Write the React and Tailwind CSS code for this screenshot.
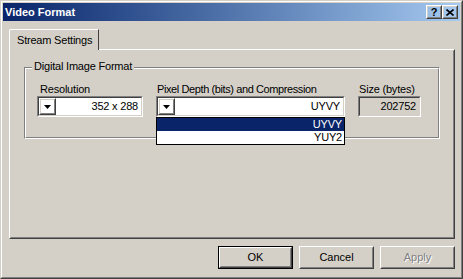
import React from 'react'

const face = 'bg-[#D4D0C8]'

function Raised({ className = '', children }) {
  return (
    <div className={`border border-t-white border-l-white border-r-[#404040] border-b-[#404040] ${className}`}>
      <div className="flex h-full w-full items-center justify-center border border-t-[#D4D0C8] border-l-[#D4D0C8] border-r-[#808080] border-b-[#808080]">
        {children}
      </div>
    </div>
  )
}

function Sunken({ className = '', inner = 'bg-white', children }) {
  return (
    <div className={`border border-t-[#808080] border-l-[#808080] border-r-white border-b-white ${className}`}>
      <div className={`flex h-full w-full items-center border border-t-[#404040] border-l-[#404040] border-r-[#D4D0C8] border-b-[#D4D0C8] ${inner}`}>
        {children}
      </div>
    </div>
  )
}

function ArrowDown() {
  return (
    <svg width="7" height="4" viewBox="0 0 7 4">
      <path d="M0 0h7L3.5 4z" fill="#000" />
    </svg>
  )
}

function Combo({ value, children }) {
  return (
    <div className="relative">
      <Sunken className="h-[21px] w-full">
        <Raised className="h-[17px] w-[17px] shrink-0">
          <ArrowDown />
        </Raised>
        <span className="flex-1 pr-[3px] text-right leading-[13px]">{value}</span>
      </Sunken>
      {children}
    </div>
  )
}

function PushButton({ label, isDefault, disabled }) {
  const btn = (
    <Raised className={isDefault ? 'h-[21px] w-[73px]' : 'h-[23px] w-[75px]'}>
      <span className={disabled ? 'text-[#808080] [text-shadow:1px_1px_0_#fff]' : ''}>{label}</span>
    </Raised>
  )
  if (!isDefault) return btn
  return <div className="border border-black">{btn}</div>
}

export default function App() {
  return (
    <div className={`h-[279px] w-[463px] ${face} font-['Liberation_Sans',Arial,sans-serif] text-[11px] text-black`}>
      <div className="h-full border border-t-[#D4D0C8] border-l-[#D4D0C8] border-r-[#404040] border-b-[#404040]">
        <div className="flex h-full flex-col border border-t-white border-l-white border-r-[#808080] border-b-[#808080] p-px">
          {/* title bar */}
          <div className="flex h-[18px] shrink-0 items-center bg-linear-to-r from-[#0A246A] to-[#A6CAF0] pl-[2px] pr-[2px]">
            <span className="flex-1 text-[11px] font-bold text-white">Video Format</span>
            <Raised className="h-[14px] w-[16px]">
              <span className="text-[11px] font-bold leading-none">?</span>
            </Raised>
            <Raised className="h-[14px] w-[16px]">
              <svg width="8" height="7" viewBox="0 0 8 7">
                <path d="M0.5 0.5l7 6M7.5 0.5l-7 6" stroke="#000" strokeWidth="1.6" />
              </svg>
            </Raised>
          </div>

          {/* tabs */}
          <div className="ml-[6px] mr-[5px] mt-[8px] flex flex-col">
            <div className="relative z-10 -mb-px flex h-[21px] w-[90px] items-center rounded-tl-[2px] border-l border-t border-r border-l-white border-t-white border-r-[#404040] bg-[#D4D0C8] pl-[7px]">
              <span className="tracking-[-0.2px]">Stream Settings</span>
            </div>
            <div className="h-[190px] border border-t-white border-l-white border-r-[#404040] border-b-[#404040]">
              <div className="h-full border border-transparent border-r-[#808080] border-b-[#808080] pl-[13px] pt-[16px]">
                {/* group box */}
                <div className="relative h-[72px] w-[416px] border border-t-[#808080] border-l-[#808080] border-r-white border-b-white">
                  <span className="absolute -top-[8px] left-[7px] bg-[#D4D0C8] px-[2px] leading-[13px] tracking-[-0.2px]">
                    Digital Image Format
                  </span>
                  <div className="flex h-full gap-[13px] border border-t-white border-l-white border-r-[#808080] border-b-[#808080] pl-[11px] pt-[14px] tracking-[-0.2px]">
                    <div className="flex w-[106px] shrink-0 flex-col">
                      <span className="pl-[3px] leading-[13px]">Resolution</span>
                      <Combo value="352 x 288" />
                    </div>
                    <div className="flex w-[189px] shrink-0 flex-col">
                      <span className="whitespace-nowrap pl-[1px] leading-[13px] tracking-[-0.4px]">Pixel Depth (bits) and Compression</span>
                      <Combo value="UYVY">
                        <div className="absolute left-0 top-full z-20 w-full border border-black bg-white">
                          <div className="h-[13px] bg-[#0A246A] pr-[2px] text-right leading-[13px] text-white">UYVY</div>
                          <div className="h-[13px] pr-[2px] text-right leading-[13px]">YUY2</div>
                        </div>
                      </Combo>
                    </div>
                    <div className="flex w-[63px] shrink-0 flex-col">
                      <span className="whitespace-nowrap pl-[1px] leading-[13px]">Size (bytes)</span>
                      <Sunken className="h-[21px] w-full" inner="bg-[#D4D0C8]">
                        <span className="flex-1 pr-[3px] text-right leading-[13px]">202752</span>
                      </Sunken>
                    </div>
                  </div>
                </div>
              </div>
            </div>
          </div>

          {/* buttons */}
          <div className="mr-[5px] mt-[7px] flex justify-end gap-[6px]">
            <PushButton label="OK" isDefault />
            <PushButton label="Cancel" />
            <PushButton label="Apply" disabled />
          </div>
        </div>
      </div>
    </div>
  )
}
